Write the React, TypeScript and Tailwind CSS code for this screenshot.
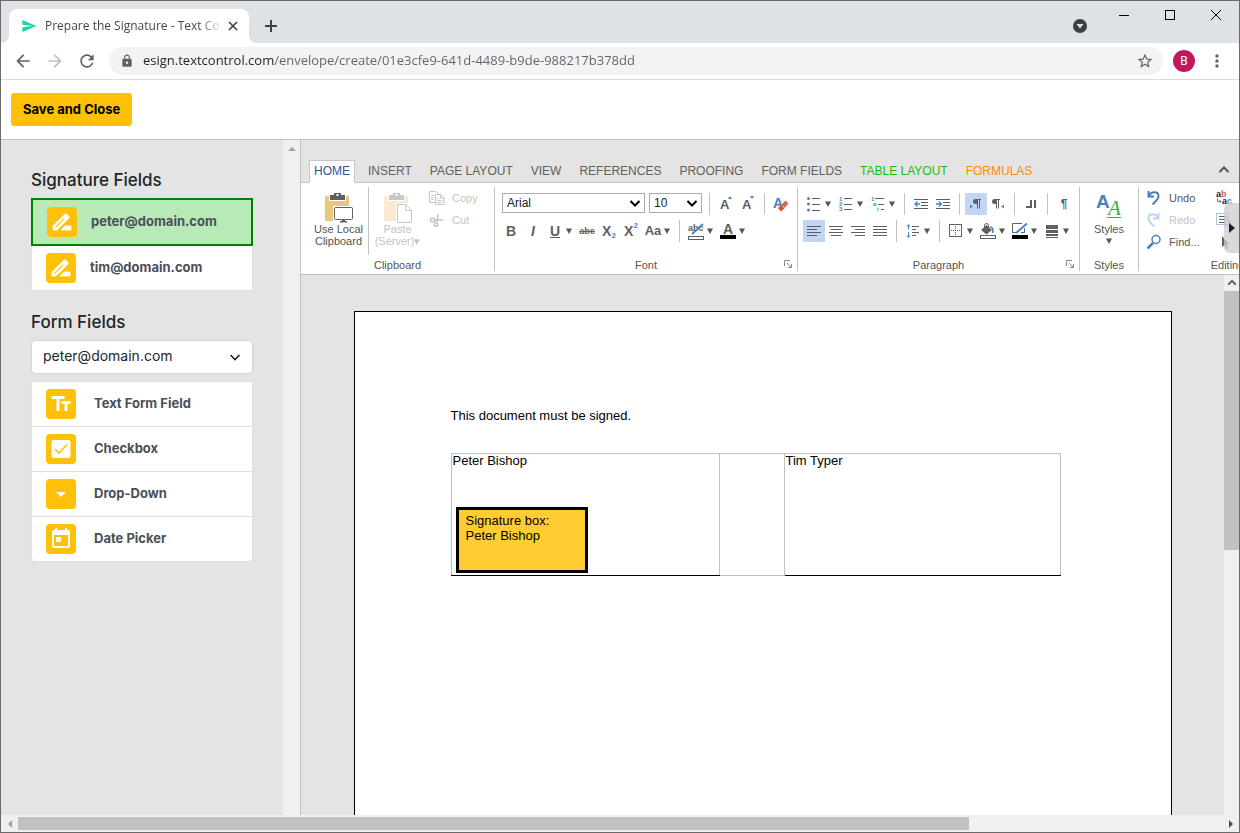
import type { ReactNode } from "react"
import {
  MdArrowBack,
  MdArrowDropDown,
  MdArrowForward,
  MdLock,
  MdMoreVert,
  MdRefresh,
  MdSend,
  MdStarBorder,
  MdTextFields,
  MdToday,
} from "react-icons/md"

const ribbonTabs = [
  { name: "HOME", className: "border-[#c6c6c6] border-b-white bg-white text-[#2b579a]" },
  { name: "INSERT", className: "border-transparent text-[#606060]" },
  { name: "PAGE LAYOUT", className: "border-transparent text-[#606060]" },
  { name: "VIEW", className: "border-transparent text-[#606060]" },
  { name: "REFERENCES", className: "border-transparent text-[#606060]" },
  { name: "PROOFING", className: "border-transparent text-[#606060]" },
  { name: "FORM FIELDS", className: "border-transparent text-[#606060]" },
  { name: "TABLE LAYOUT", className: "border-transparent text-[#17c200]" },
  { name: "FORMULAS", className: "border-transparent text-[#ff8c00]" },
]

const formFields = [
  { name: "Text Form Field", icon: <MdTextFields className="size-6" /> },
  { name: "Checkbox", icon: <CheckboxIcon /> },
  { name: "Drop-Down", icon: <MdArrowDropDown className="size-6" /> },
  { name: "Date Picker", icon: <MdToday className="size-6" /> },
]

/* ---------- icons ---------- */

function SignIcon() {
  return (
    <svg viewBox="0 0 24 24" className="size-6" fill="currentColor" stroke="currentColor" strokeWidth=".8">
      <path d="M18.41 5.8 17.2 4.59c-.78-.78-2.05-.78-2.83 0l-2.68 2.68L3 15.96V20h4.04l8.74-8.74 2.63-2.63c.79-.78.79-2.05 0-2.83zM6.21 18H5v-1.21l8.66-8.66 1.21 1.21L6.21 18zM11 20l4-4h6v4H11z" />
    </svg>
  )
}

function CheckboxIcon() {
  return (
    <svg viewBox="0 0 24 24" className="size-6">
      <rect x="2.5" y="3" width="19" height="18" rx="2" fill="#fff" />
      <path d="m6 12 4 4 8-8.5" fill="none" stroke="#ffc107" strokeWidth="1.6" />
    </svg>
  )
}

function Chevron({ className, weight = 2 }: { className: string; weight?: number }) {
  return (
    <svg viewBox="0 0 12 12" className={className} fill="none" stroke="currentColor" strokeWidth={weight}>
      <path d="M1.5 4 6 8.5 10.5 4" />
    </svg>
  )
}

function Caret() {
  return (
    <svg viewBox="0 0 6 6" className="size-1.5" fill="#555">
      <path d="M0 0.500h6L3 6z" />
    </svg>
  )
}

function LocalClipboardIcon() {
  return (
    <svg viewBox="0 0 30 31" className="h-[31px] w-[30px]">
      <path d="M1 4h24v25H1z" fill="#ecc67c" />
      <path d="M5 1h17v8H5z" fill="#fff" />
      <path d="M6 3h4V1h7v2h4v5H6z" fill="#606060" />
      <path d="M12.500 2h2v2h-2z" fill="#fff" />
      <rect x="9" y="14" width="21" height="17" fill="#fff" />
      <rect x="10.500" y="15.500" width="18" height="12" rx="1" fill="#fff" stroke="#606060" />
      <path d="M18 28h3v1h2v1.500h-7V29h2z" fill="#606060" />
    </svg>
  )
}

function PasteIcon() {
  return (
    <svg viewBox="0 0 30 31" className="h-[31px] w-[30px]">
      <path d="M1 4h24v25H1z" fill="#f9ead1" />
      <path d="M5 1h17v8H5z" fill="#fff" />
      <path d="M6 3h4V1h7v2h4v5H6z" fill="#c8c8c8" />
      <path d="M12.500 2h2v2h-2z" fill="#fff" />
      <path d="M13 11h10l7 7v13H13z" fill="#fff" />
      <path d="M14.500 12.500h8l6 6v12h-14zM22.500 12.500v6h6" fill="#fff" stroke="#c8c8c8" />
    </svg>
  )
}

function CopyIcon() {
  return (
    <svg viewBox="0 0 16 16" className="size-4" fill="none" stroke="#c4c4c4">
      <path d="M6 12.500H.5V1.500H7L9.500 4" />
      <path d="M6.500 4.500H12l3 3v7H6.500zM11.500 4.500v3.500h3.500" fill="#fff" />
      <path d="M2 5.500h3M2 7.500h3M2 9.500h3M8 8.500h2.500M8 10.500h5.500M8 12.500h5.500" stroke="#bcd3ea" />
    </svg>
  )
}

function CutIcon() {
  return (
    <svg viewBox="0 0 16 16" className="size-4" fill="none" stroke="#c4c4c4" strokeWidth="1.500">
      <circle cx="3.500" cy="8" r="2" />
      <circle cx="7" cy="12.500" r="1.800" />
      <path d="M5.500 8H14M7.500 10.500 9.500 2" />
    </svg>
  )
}

function Lines({ rows }: { rows: [number, number][] }) {
  return (
    <svg viewBox="0 0 14 12" className="h-3 w-3.5" stroke="#606060" shapeRendering="crispEdges">
      {rows.map(([from, to], i) => (
        <path key={i} d={`M${from} ${i * 3 + 1.5}H${to}`} />
      ))}
    </svg>
  )
}

function BulletsIcon() {
  return (
    <svg viewBox="0 0 16 16" className="size-4">
      <g fill="#4a86c5">
        <circle cx="2.500" cy="2.500" r="1.500" />
        <circle cx="2.500" cy="8" r="1.500" />
        <circle cx="2.500" cy="14" r="1.500" />
      </g>
      <path d="M6 2.500h8M6 8.500h8M6 14.500h8" stroke="#606060" />
    </svg>
  )
}

function NumberingIcon() {
  return (
    <svg viewBox="0 0 16 16" className="size-4">
      <g fill="#4a86c5" fontSize="6" fontWeight="700" fontFamily="Liberation Sans">
        <text x="1" y="5">1</text>
        <text x="1" y="10">2</text>
        <text x="1" y="15">3</text>
      </g>
      <path d="M6 2.500h8M6 8.500h8M6 13.500h8" stroke="#606060" />
    </svg>
  )
}

function MultilevelIcon() {
  return (
    <svg viewBox="0 0 16 16" className="size-4">
      <g fill="#4a86c5" fontSize="6" fontWeight="700" fontFamily="Liberation Sans">
        <text x="1" y="5">1</text>
        <text x="3" y="10">a</text>
        <text x="7" y="15">i</text>
      </g>
      <path d="M5 2.500h9M8 8.500h6M11 13.500h3" stroke="#606060" />
    </svg>
  )
}

function IndentIcon({ flip }: { flip?: boolean }) {
  return (
    <svg viewBox="0 0 14 12" className="h-3 w-3.5">
      <path d="M0 1.500h14M7 4.500h7M7 7.500h7M0 10.500h14" stroke="#606060" />
      <path
        d={flip ? "M0 6h5M3 3.500 5.500 6 3 8.500" : "M1 6h5M3.500 3.500 1 6l2.500 2.500"}
        stroke="#4a86c5"
        strokeWidth="1.300"
        fill="none"
      />
    </svg>
  )
}

function DirectionIcon({ rtl }: { rtl?: boolean }) {
  return (
    <svg viewBox="0 0 14 14" className="size-3.5">
      <path
        d={
          rtl
            ? "M3.500 2H9v1H8v8.500H7V3H6v8.500H5V7H3.500a2.500 2.500 0 0 1 0-5z"
            : "M6.500 2H12v1h-1v8.500h-1V3H9v8.500H8V7H6.500a2.500 2.500 0 0 1 0-5z"
        }
        fill="#606060"
      />
      <path d={rtl ? "M13 7.500v4l-3-2z" : "M1 7.500v4l3-2z"} fill="#4a86c5" />
    </svg>
  )
}

function TabStopIcon() {
  return (
    <svg viewBox="0 0 12 12" className="size-3" fill="#606060" shapeRendering="crispEdges">
      <path d="M1 8h4V2h2v8H1zM9 2h2v8H9z" />
    </svg>
  )
}

function LineSpacingIcon() {
  return (
    <svg viewBox="0 0 14 14" className="size-3.5" fill="none">
      <path d="M6 2.500h7M6 5.500h4M6 8.500h7M6 11.500h4" stroke="#606060" />
      <path d="M2.500 1v4.500M1 2.500l1.500-2L4 2.500M2.500 8v5M1 11.500l1.500 2 1.500-2" stroke="#4a86c5" />
    </svg>
  )
}

function BordersIcon() {
  return (
    <svg viewBox="0 0 14 14" className="size-3.5" fill="none" stroke="#606060">
      <rect x=".5" y=".5" width="12" height="12" />
      <path d="M2 6.500h10M6.500 2v10" strokeDasharray="1 1" />
    </svg>
  )
}

function ShadingIcon() {
  return (
    <svg viewBox="0 0 16 16" className="size-4">
      <path d="M1 7 6.500 2 12 7l-5.500 4.500z" fill="#606060" />
      <path d="M4.500 6V2.500a2 2 0 0 1 4 0V6" stroke="#606060" fill="none" />
      <path d="M10 4c3 0 3.500 3 2.500 6" stroke="#4a86c5" strokeWidth="1.600" fill="none" />
      <rect x=".5" y="12.500" width="15" height="3" fill="#fff" stroke="#606060" />
    </svg>
  )
}

function FrameColorIcon() {
  return (
    <svg viewBox="0 0 16 16" className="size-4">
      <path d="M10 .5H.5v9H4M12.500 5v4.500H9" stroke="#606060" fill="none" />
      <path d="M4 10 15 .5" stroke="#4a86c5" strokeWidth="2" />
      <path d="M0 12h16v4H0z" />
    </svg>
  )
}

function FrameStyleIcon() {
  return (
    <svg viewBox="0 0 12 14" className="h-3.5 w-3" fill="#606060" shapeRendering="crispEdges">
      <path d="M0 1h12v4H0zM0 6h12v3H0zM0 10h12v2H0zM0 13h12v1H0z" />
    </svg>
  )
}

function FontSizeIcon({ down }: { down?: boolean }) {
  return (
    <svg viewBox="0 0 14 18" className="h-[18px] w-3.5">
      <text x="1" y="14" fontSize="13" fontWeight="700" fill="#606060" fontFamily="Liberation Sans">
        A
      </text>
      <path d={down ? "M9 1h4l-2 3z" : "M9 4h4l-2-3z"} fill="#4a86c5" />
    </svg>
  )
}

function ClearFormatIcon() {
  return (
    <svg viewBox="0 0 16 16" className="size-4">
      <text x="0" y="12" fontSize="14" fontWeight="700" fill="#4a7fbf" fontFamily="Liberation Sans">
        A
      </text>
      <path d="m5 12 3-3 3.500 3.500L8 15.500z" fill="#d9532f" />
      <path d="m8.500 8.500 4-4 3 3-4 4.500z" fill="#dc6544" />
    </svg>
  )
}

function HighlightIcon() {
  return (
    <svg viewBox="0 0 16 17" className="h-[17px] w-4">
      <text x="0" y="8" fontSize="9" fill="#606060" fontFamily="Liberation Sans">
        abc
      </text>
      <path d="M4 11 15 1" stroke="#4a86c5" strokeWidth="2" />
      <rect x=".5" y="13.500" width="15" height="3" fill="#fff" stroke="#606060" />
    </svg>
  )
}

function FontColorIcon() {
  return (
    <svg viewBox="0 0 16 17" className="h-[17px] w-4">
      <text x="3" y="11" fontSize="14" fontWeight="700" fill="#606060" fontFamily="Liberation Sans">
        A
      </text>
      <path d="M0 12h16v4H0z" />
    </svg>
  )
}

function StylesIcon() {
  return (
    <svg viewBox="0 0 28 32" className="h-8 w-7">
      <text x="1" y="17" fontSize="19" fontWeight="700" fill="#4a7fbf" fontFamily="Liberation Sans">
        A
      </text>
      <text x="13" y="24" fontSize="21" fontStyle="italic" fill="#43ad43" fontFamily="Liberation Serif">
        A
      </text>
      <path d="M12 26.500h14" stroke="#43ad43" />
    </svg>
  )
}

function UndoIcon() {
  return (
    <svg viewBox="0 0 16 16" className="size-4" fill="none" stroke="currentColor" strokeWidth="2">
      <path d="M2.500 1v5.500H8M3 6c2-5 9.500-5 9.500 0 0 3-2.500 5-6 8.500" />
    </svg>
  )
}

function RedoIcon() {
  return (
    <svg viewBox="0 0 16 16" className="size-4" fill="none" stroke="currentColor" strokeWidth="2">
      <path d="M12.500 1v5.500H7M12 6C10 1 2.500 1 2.500 6c0 3 2.500 6 6 8.500" />
    </svg>
  )
}

function FindIcon() {
  return (
    <svg viewBox="0 0 16 16" className="size-4" fill="none" stroke="currentColor">
      <circle cx="10" cy="5.500" r="4" strokeWidth="1.500" />
      <path d="m7 9-5.500 5.500" strokeWidth="2.500" />
    </svg>
  )
}

function ReplaceIcon() {
  return (
    <svg viewBox="0 0 18 18" className="size-[18px] shrink-0">
      <g fontSize="9" fontWeight="700" fontFamily="Liberation Sans">
        <text x="1" y="8" fill="#222">a</text>
        <text x="6" y="8" fill="#e0603f">b</text>
        <text x="7" y="15" fill="#222">a</text>
        <text x="12" y="15" fill="#4a86c5">c</text>
      </g>
      <path d="M2.500 9.500v3H6M4.500 11 6 12.500 4.500 14" stroke="#4a86c5" fill="none" />
    </svg>
  )
}

function SelectAllIcon() {
  return (
    <svg viewBox="0 0 16 16" className="size-4" fill="none">
      <rect x=".5" y="1.500" width="12" height="11" stroke="#4a86c5" strokeDasharray="1 1" />
      <path d="M3 4.500h8M3 7.500h7M3 10.500h6" stroke="#606060" />
      <path d="M9 6v8l2-2 2 3 1-1-1.500-3H15z" fill="#fff" stroke="#888" />
    </svg>
  )
}

function PointerIcon() {
  return (
    <svg viewBox="0 0 16 16" className="size-4" fill="#606060">
      <path d="M6 2v11l2.500-2 2 4 1.500-1-2-3.500h3z" />
    </svg>
  )
}

/* ---------- ribbon parts ---------- */

function ToolButton({ label, active, children }: { label: string; active?: boolean; children: ReactNode }) {
  return (
    <button
      type="button"
      aria-label={label}
      aria-pressed={active}
      className={`flex h-[22px] w-[22px] shrink-0 items-center justify-center text-sm font-bold text-[#606060] ${
        active ? "bg-[#c2d5f2]" : ""
      }`}
    >
      {children}
    </button>
  )
}

function SplitButton({ label, children }: { label: string; children: ReactNode }) {
  return (
    <div className="flex w-8 shrink-0 items-center">
      <ToolButton label={label}>{children}</ToolButton>
      <button type="button" aria-label={`${label} options`} className="flex h-[22px] w-2 items-center">
        <Caret />
      </button>
    </div>
  )
}

function Divider() {
  return <div className="mx-[5px] h-[22px] w-px shrink-0 bg-[#c0c0c0]" />
}

function Launcher({ label }: { label: string }) {
  return (
    <button type="button" aria-label={label} className="absolute right-[5px] bottom-[3px]">
      <svg viewBox="0 0 8 8" className="size-2" fill="none" stroke="#888">
        <path d="M.5 6V.5H6M3 3l4 4M7.500 4v3.500H4" />
      </svg>
    </button>
  )
}

function Group({ name, className, children }: { name: string; className?: string; children: ReactNode }) {
  return (
    <div className={`relative flex h-[84px] shrink-0 flex-col border-r border-[#c0c0c0] ${className ?? ""}`}>
      <div className="flex-1">{children}</div>
      <div className="text-center text-[11px] leading-3">{name}</div>
    </div>
  )
}

function RibbonSelect({ label, value, className }: { label: string; value: string; className: string }) {
  return (
    <div className={`relative mx-0.5 h-5 shrink-0 ${className}`}>
      <select
        aria-label={label}
        className="block h-5 w-full appearance-none border border-[#ababab] bg-white pl-1 text-xs text-[#222]"
      >
        <option>{value}</option>
      </select>
      <Chevron className="pointer-events-none absolute top-1 right-1 size-3 text-black" />
    </div>
  )
}

function Ribbon() {
  return (
    <div className="font-['Liberation_Sans',Arial,sans-serif] text-[#555]">
      <div className="flex items-end border-b border-[#c6c6c6] pt-5 pl-2">
        <div role="tablist" className="flex gap-2">
          {ribbonTabs.map((tab, i) => (
            <button
              key={tab.name}
              type="button"
              role="tab"
              aria-selected={i === 0}
              className={`-mb-px h-[23px] shrink-0 border px-1 pb-0.5 text-xs whitespace-nowrap ${tab.className}`}
            >
              {tab.name}
            </button>
          ))}
        </div>
        <button type="button" aria-label="Collapse ribbon" className="mr-[9px] mb-1.5 ml-auto">
          <Chevron className="size-3 rotate-180" />
        </button>
      </div>

      <div className="relative flex h-[92px] overflow-hidden border-b border-[#c0c0c0] bg-white pt-1">
        <Group name="Clipboard" className="w-[194px]">
          <div className="flex">
            <button
              type="button"
              className="flex h-[68px] w-[68px] flex-col items-center border-r border-[#c0c0c0] pt-[5px] pl-2 text-[11px] leading-3"
            >
              <LocalClipboardIcon />
              Use Local
              <br />
              Clipboard
            </button>
            <button
              type="button"
              disabled
              className="flex w-[57px] flex-col items-center pt-[5px] text-[11px] leading-3 text-[#c4c4c4]"
            >
              <PasteIcon />
              Paste
              <span className="whitespace-nowrap">(Server)▾</span>
            </button>
            <div className="flex flex-col pl-[3px] text-[11px] text-[#c4c4c4]">
              <button type="button" disabled className="flex h-[22px] items-center gap-[7px]">
                <CopyIcon />
                Copy
              </button>
              <button type="button" disabled className="flex h-[22px] items-center gap-[7px]">
                <CutIcon />
                Cut
              </button>
            </div>
          </div>
        </Group>

        <Group name="Font" className="w-[303px]">
          <div className="flex flex-col gap-[5px] pt-1.5 pl-[5px]">
            <div className="flex h-[22px]">
              <RibbonSelect label="Font family" value="Arial" className="w-[143px]" />
              <RibbonSelect label="Font size" value="10" className="w-[53px]" />
              <Divider />
              <ToolButton label="Increase font size">
                <FontSizeIcon />
              </ToolButton>
              <ToolButton label="Decrease font size">
                <FontSizeIcon down />
              </ToolButton>
              <Divider />
              <ToolButton label="Clear formatting">
                <ClearFormatIcon />
              </ToolButton>
            </div>
            <div className="flex h-[22px]">
              <ToolButton label="Bold">B</ToolButton>
              <ToolButton label="Italic">
                <i>I</i>
              </ToolButton>
              <SplitButton label="Underline">
                <u>U</u>
              </SplitButton>
              <ToolButton label="Strikethrough">
                <s className="text-[9px]">abc</s>
              </ToolButton>
              <ToolButton label="Subscript">
                X<span className="self-end text-[8px] leading-3 text-[#4a86c5]">2</span>
              </ToolButton>
              <ToolButton label="Superscript">
                X<span className="self-start text-[8px] leading-3 text-[#4a86c5]">2</span>
              </ToolButton>
              <SplitButton label="Change case">
                <span className="text-[13px]">Aa</span>
              </SplitButton>
              <Divider />
              <SplitButton label="Text background color">
                <HighlightIcon />
              </SplitButton>
              <SplitButton label="Text color">
                <FontColorIcon />
              </SplitButton>
            </div>
          </div>
          <Launcher label="Font settings" />
        </Group>

        <Group name="Paragraph" className="w-[282px]">
          <div className="flex flex-col gap-[5px] pt-1.5 pl-[5px]">
            <div className="flex h-[22px]">
              <SplitButton label="Bullets">
                <BulletsIcon />
              </SplitButton>
              <SplitButton label="Numbering">
                <NumberingIcon />
              </SplitButton>
              <SplitButton label="Multilevel list">
                <MultilevelIcon />
              </SplitButton>
              <Divider />
              <ToolButton label="Decrease indent">
                <IndentIcon />
              </ToolButton>
              <ToolButton label="Increase indent">
                <IndentIcon flip />
              </ToolButton>
              <Divider />
              <ToolButton label="Left to right" active>
                <DirectionIcon />
              </ToolButton>
              <ToolButton label="Right to left">
                <DirectionIcon rtl />
              </ToolButton>
              <Divider />
              <ToolButton label="Tab stops">
                <TabStopIcon />
              </ToolButton>
              <Divider />
              <ToolButton label="Control characters">
                <span className="text-xs">¶</span>
              </ToolButton>
            </div>
            <div className="flex h-[22px]">
              <ToolButton label="Align left" active>
                <Lines rows={[[0, 14], [0, 10], [0, 14], [0, 10]]} />
              </ToolButton>
              <ToolButton label="Center">
                <Lines rows={[[0, 14], [2, 12], [0, 14], [2, 12]]} />
              </ToolButton>
              <ToolButton label="Align right">
                <Lines rows={[[0, 14], [4, 14], [0, 14], [4, 14]]} />
              </ToolButton>
              <ToolButton label="Justify">
                <Lines rows={[[0, 14], [0, 14], [0, 14], [0, 14]]} />
              </ToolButton>
              <Divider />
              <SplitButton label="Line spacing">
                <LineSpacingIcon />
              </SplitButton>
              <Divider />
              <SplitButton label="Borders">
                <BordersIcon />
              </SplitButton>
              <SplitButton label="Shading">
                <ShadingIcon />
              </SplitButton>
              <SplitButton label="Frame line color">
                <FrameColorIcon />
              </SplitButton>
              <SplitButton label="Frame line width">
                <FrameStyleIcon />
              </SplitButton>
            </div>
          </div>
          <Launcher label="Paragraph settings" />
        </Group>

        <Group name="Styles" className="w-[59px]">
          <button type="button" className="flex w-full flex-col items-center pt-1 text-[11px] leading-3">
            <StylesIcon />
            Styles
            <span className="flex h-3 items-center">
              <Caret />
            </span>
          </button>
        </Group>

        <Group name="Editing" className="w-[178px]">
          <div className="flex pl-[7px] text-[11px]">
            <div className="flex w-[67px] flex-col">
              <button type="button" className="flex h-[22px] items-center gap-[7px]">
                <span className="text-[#4a7fbf]">
                  <UndoIcon />
                </span>
                Undo
              </button>
              <button type="button" disabled className="flex h-[22px] items-center gap-[7px] text-[#c4c4c4]">
                <span className="text-[#bcd3ea]">
                  <RedoIcon />
                </span>
                Redo
              </button>
              <button type="button" className="flex h-[22px] items-center gap-[7px]">
                <span className="text-[#4a7fbf]">
                  <FindIcon />
                </span>
                Find...
              </button>
            </div>
            <div className="flex w-[22px] flex-col">
              <ToolButton label="Replace">
                <ReplaceIcon />
              </ToolButton>
              <ToolButton label="Select all">
                <SelectAllIcon />
              </ToolButton>
              <ToolButton label="Select objects">
                <PointerIcon />
              </ToolButton>
            </div>
          </div>
        </Group>

        <button
          type="button"
          aria-label="Scroll ribbon right"
          className="absolute top-5 right-0 flex h-[50px] w-[15px] items-center justify-center rounded-l-md bg-[#cccccc]/75"
        >
          <svg viewBox="0 0 6 10" className="h-2.5 w-1.5" fill="#222">
            <path d="M0 0v10l6-5z" />
          </svg>
        </button>
      </div>
    </div>
  )
}

/* ---------- browser chrome ---------- */

function TabStrip() {
  return (
    <div className="flex h-[42px] shrink-0 bg-[#dee1e6] pl-2">
      <div className="relative mt-2 flex w-60 items-center rounded-t-lg bg-white pr-[11px] pl-3 before:absolute before:bottom-0 before:-left-2 before:size-2 before:bg-[radial-gradient(circle_at_0_0,transparent_8px,white_8px)] after:absolute after:-right-2 after:bottom-0 after:size-2 after:bg-[radial-gradient(circle_at_100%_0,transparent_8px,white_8px)]">
        <MdSend className="size-4 shrink-0 text-[#1dd6a8]" />
        <span className="ml-2 flex-1 overflow-hidden bg-linear-to-r from-[#3c4043] from-88% to-[#3c4043]/10 bg-clip-text text-xs whitespace-nowrap text-transparent">
          Prepare the Signature - Text Cont
        </span>
        <button type="button" aria-label="Close tab" className="ml-2">
          <svg viewBox="0 0 10 10" className="size-2.5" stroke="#3c4043" strokeWidth="1.600">
            <path d="m1 1 8 8M9 1 1 9" />
          </svg>
        </button>
      </div>
      <button type="button" aria-label="New tab" className="mt-2 ml-4">
        <svg viewBox="0 0 12 12" className="size-3" stroke="#3c4043" strokeWidth="2">
          <path d="M6 0v12M0 6h12" />
        </svg>
      </button>
      <div className="ml-auto flex">
        <button type="button" aria-label="Search tabs" className="mt-2 mr-3.5">
          <svg viewBox="0 0 14 14" className="size-3.5">
            <circle cx="7" cy="7" r="7" fill="#3c4043" />
            <path d="M3.500 5h7L7 9.500z" fill="#dee1e6" />
          </svg>
        </button>
        <button type="button" aria-label="Minimize" className="flex h-7 w-[46px] items-center justify-center">
          <svg viewBox="0 0 10 10" className="size-2.5" stroke="#000">
            <path d="M0 5.500h10" />
          </svg>
        </button>
        <button type="button" aria-label="Maximize" className="flex h-7 w-[46px] items-center justify-center">
          <svg viewBox="0 0 10 10" className="size-2.5" stroke="#000" fill="none">
            <rect x=".5" y=".5" width="9" height="9" />
          </svg>
        </button>
        <button type="button" aria-label="Close" className="flex h-7 w-[46px] items-center justify-center">
          <svg viewBox="0 0 10 10" className="size-2.5" stroke="#000">
            <path d="m0 0 10 10M10 0 0 10" />
          </svg>
        </button>
      </div>
    </div>
  )
}

function AddressBar() {
  return (
    <div className="flex h-[37px] shrink-0 items-center border-b border-[#dadce0] bg-white pr-3 pl-1.5 text-[#5f6368]">
      <button type="button" aria-label="Back" className="flex w-8 justify-center">
        <MdArrowBack className="size-5" />
      </button>
      <button type="button" aria-label="Forward" className="flex w-8 justify-center text-[#bdc1c6]">
        <MdArrowForward className="size-5" />
      </button>
      <button type="button" aria-label="Reload" className="flex w-8 justify-center">
        <MdRefresh className="size-5" />
      </button>
      <div className="ml-1.5 flex h-7 flex-1 items-center rounded-full bg-[#f1f3f4] pr-[9px] pl-[11px]">
        <MdLock className="size-3.5" />
        <input
          aria-label="Address"
          defaultValue="esign.textcontrol.com/envelope/create/01e3cfe9-641d-4489-b9de-988217b378dd"
          className="ml-[9px] min-w-0 flex-1 bg-[linear-gradient(90deg,#202124_132px,#5f6368_132px)] bg-clip-text text-[13px] text-transparent outline-none"
        />
        <button type="button" aria-label="Bookmark">
          <MdStarBorder className="size-[18px]" />
        </button>
      </div>
      <button
        type="button"
        aria-label="Profile"
        className="ml-2.5 flex size-[22px] items-center justify-center rounded-full bg-[#c2185b] font-['Roboto',sans-serif] text-xs text-white"
      >
        B
      </button>
      <button type="button" aria-label="Menu" className="ml-3">
        <MdMoreVert className="size-5" />
      </button>
    </div>
  )
}

/* ---------- app ---------- */

function Sidebar() {
  return (
    <aside className="flex w-[300px] shrink-0 border-r border-[#c0c0c0] font-['Inter',sans-serif]">
      <div className="flex-1 px-[30px] pt-7">
        <h2 className="text-[17px] leading-6 font-medium text-[#212529]">Signature Fields</h2>
        <ul className="mt-1.5 text-[13px] font-bold text-[#495057]">
          <li>
            <button
              type="button"
              className="flex h-12 w-full items-center border-2 border-[#008000] bg-[#b8eab8] pl-3.5"
            >
              <span className="flex size-[30px] items-center justify-center rounded-sm bg-[#ffc107] text-white">
                <SignIcon />
              </span>
              <span className="ml-3.5">peter@domain.com</span>
            </button>
          </li>
          <li>
            <button
              type="button"
              className="flex h-[45px] w-full items-center border border-t-0 border-[#dfdfdf] bg-white pl-3.5"
            >
              <span className="flex size-[30px] items-center justify-center rounded-sm bg-[#ffc107] text-white">
                <SignIcon />
              </span>
              <span className="ml-3.5">tim@domain.com</span>
            </button>
          </li>
        </ul>

        <h2 className="mt-[19px] text-[17px] leading-6 font-medium text-[#212529]">Form Fields</h2>
        <div className="relative mt-1.5 text-[#212529]">
          <select
            aria-label="Signer"
            className="block h-[34px] w-full appearance-none rounded-sm border border-[#ced4da] bg-white pb-0.5 pl-[11px] text-sm"
          >
            <option>peter@domain.com</option>
            <option>tim@domain.com</option>
          </select>
          <Chevron className="pointer-events-none absolute top-[11px] right-3 size-3" weight={1.6} />
        </div>
        <ul className="mt-[7px] overflow-hidden rounded-b-sm border border-[#dfdfdf] bg-white text-[13px] font-bold text-[#495057]">
          {formFields.map((field) => (
            <li key={field.name} className="border-b border-[#dfdfdf] last:border-b-0">
              <button type="button" className="flex h-11 w-full items-center pl-3.5">
                <span className="flex size-[30px] items-center justify-center rounded-sm bg-[#ffc107] text-white">
                  {field.icon}
                </span>
                <span className="ml-[18px]">{field.name}</span>
              </button>
            </li>
          ))}
        </ul>
      </div>
      <div className="flex w-[17px] justify-center bg-[#f0f0f0] pt-[7px]">
        <svg viewBox="0 0 8 4" className="h-1 w-2" fill="#a3a3a3">
          <path d="M0 4h8L4 0z" />
        </svg>
      </div>
    </aside>
  )
}

function DocumentView() {
  return (
    <div className="flex min-h-0 flex-1 font-['Liberation_Sans',Arial,sans-serif]">
      <div className="flex min-w-0 flex-1 justify-center overflow-hidden pt-9">
        <div className="w-[818px] shrink-0 border border-b-0 border-black bg-white px-24 pt-24 text-[13px] leading-[15px] text-black">
          <p>This document must be signed.</p>
          <table className="mt-[30px] w-[610px] table-fixed border-collapse leading-[13px]">
            <tbody>
              <tr className="h-[122px] align-top">
                <td className="w-[268px] border border-[#c0c0c0] border-b-black pl-px">
                  Peter Bishop
                  <div className="mt-10 ml-[3px] h-[66px] w-[132px] border-3 border-black bg-[#ffcc33] px-[7px] pt-[3px] leading-[15px]">
                    Signature box:
                    <br />
                    Peter Bishop
                  </div>
                </td>
                <td className="w-[65px] border border-[#c0c0c0]" />
                <td className="border border-[#c0c0c0] border-b-black pl-px">Tim Typer</td>
              </tr>
            </tbody>
          </table>
        </div>
      </div>
      <div className="flex w-[15px] flex-col bg-[#f0f0f0]">
        <div className="flex h-4 shrink-0 items-center justify-center">
          <Chevron className="size-2.5 rotate-180 text-[#505050]" />
        </div>
        <div className="h-[48%] bg-[#c1c1c1]" />
      </div>
    </div>
  )
}

export default function App() {
  return (
    <div className="flex h-screen flex-col overflow-hidden border border-[#6a6a6a] bg-[#e4e4e4] font-['Open_Sans',sans-serif]">
      <TabStrip />
      <AddressBar />
      <header className="flex h-[60px] shrink-0 items-center border-b border-[#c0c0c0] bg-white pl-2.5">
        <button
          type="button"
          className="h-[33px] rounded-[3px] bg-[#ffc107] px-3 font-['Inter',sans-serif] text-[13px] font-bold whitespace-nowrap text-black"
        >
          Save and Close
        </button>
      </header>
      <div className="flex min-h-0 flex-1">
        <Sidebar />
        <main className="flex min-w-0 flex-1 flex-col">
          <Ribbon />
          <DocumentView />
        </main>
      </div>
      <div className="flex h-[17px] shrink-0 items-center bg-[#f0f0f0]">
        <span className="flex w-[17px] justify-center">
          <svg viewBox="0 0 4 8" className="h-2 w-1" fill="#a3a3a3">
            <path d="M4 0v8L0 4z" />
          </svg>
        </span>
        <div className="flex-1">
          <div className="h-[13px] w-[79%] bg-[#c1c1c1]" />
        </div>
        <span className="flex w-[17px] justify-center">
          <svg viewBox="0 0 4 8" className="h-2 w-1" fill="#505050">
            <path d="M0 0v8l4-4z" />
          </svg>
        </span>
      </div>
    </div>
  )
}
